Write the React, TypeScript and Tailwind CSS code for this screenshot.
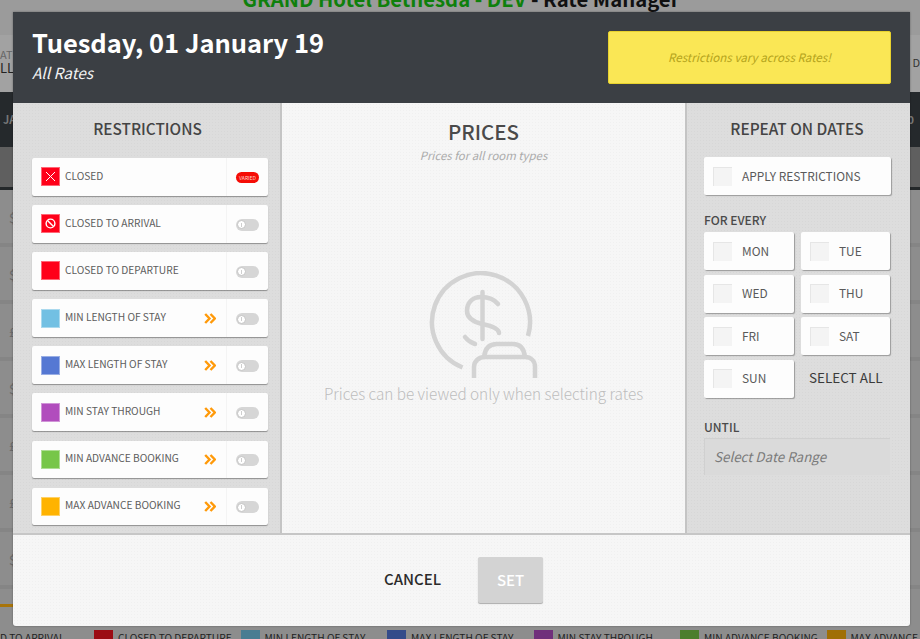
const leftTexture = "bg-[#dddddd] bg-[radial-gradient(#d7d7d7_0.7px,transparent_0.7px)] bg-[length:3px_3px]";
const lightTexture = "bg-[#f6f6f6] bg-[radial-gradient(#f0f0f0_0.7px,transparent_0.7px)] bg-[length:3px_3px]";

const RESTRICTIONS = [
  { label: "CLOSED", color: "bg-[#ff0019]", icon: "x", varied: true },
  { label: "CLOSED TO ARRIVAL", color: "bg-[#ff0019]", icon: "ban" },
  { label: "CLOSED TO DEPARTURE", color: "bg-[#ff0019]" },
  { label: "MIN LENGTH OF STAY", color: "bg-[#72c0e3]", more: true },
  { label: "MAX LENGTH OF STAY", color: "bg-[#5578d3]", more: true },
  { label: "MIN STAY THROUGH", color: "bg-[#b14dbd]", more: true },
  { label: "MIN ADVANCE BOOKING", color: "bg-[#77c648]", more: true },
  { label: "MAX ADVANCE BOOKING", color: "bg-[#ffb300]", more: true },
];

const LEGEND = [
  { label: "CLOSED TO DEPARTURE", color: "bg-[#9c0c14]" },
  { label: "MIN LENGTH OF STAY", color: "bg-[#4a7d92]" },
  { label: "MAX LENGTH OF STAY", color: "bg-[#344b8a]" },
  { label: "MIN STAY THROUGH", color: "bg-[#702f7b]" },
  { label: "MIN ADVANCE BOOKING", color: "bg-[#4c7e2d]" },
  { label: "MAX ADVANCE B", color: "bg-[#a06f06]" },
];

const BG_ROWS = ["$", "$", "£", "$", "£", "£", "$"];

function Swatch({ color, icon }: { color: string; icon?: string }) {
  return (
    <div className={`${color} w-[19px] h-[19px] shrink-0 flex items-center justify-center border border-white/40`}>
      {icon === "x" && (
        <svg width="11" height="11" viewBox="0 0 11 11" fill="none" stroke="#fff" strokeWidth="1">
          <path d="M1 1l9 9M10 1l-9 9" />
        </svg>
      )}
      {icon === "ban" && (
        <svg width="11" height="11" viewBox="0 0 11 11" fill="none" stroke="#fff" strokeWidth="1.4">
          <circle cx="5.5" cy="5.5" r="4.4" />
          <path d="M2.5 2.5l6 6" />
        </svg>
      )}
    </div>
  );
}

function Chevrons() {
  return (
    <svg width="12" height="11" viewBox="0 0 12 11" fill="none" stroke="#ff9a0a" strokeWidth="2.4" className="mr-[10px] mt-px shrink-0">
      <path d="M1.2 1l4.3 4.5L1.2 10M6.5 1l4.3 4.5L6.5 10" />
    </svg>
  );
}

function Toggle() {
  return (
    <div className="w-[23px] h-[12px] rounded-full bg-[#d6d6d6] flex items-center pl-[1px]">
      <div className="w-[9px] h-[9px] rounded-full bg-white border border-[#c4c4c4] flex items-center justify-center">
        <div className="w-px h-[4px] bg-[#cfcfcf]" />
      </div>
    </div>
  );
}

function RestrictionCard({ item }: { item: (typeof RESTRICTIONS)[number] }) {
  return (
    <div className="h-[37.6px] bg-[#fdfdfd] rounded-[2px] shadow-[0_1px_1px_rgba(0,0,0,0.35)] flex items-center">
      <div className="flex-1 min-w-0 flex items-center pl-[9px] h-full">
        <Swatch color={item.color} icon={item.icon} />
        <span className="ml-[5px] flex-1 text-[10.2px] leading-none text-[#5c5c5c] -mt-[2px] whitespace-nowrap">{item.label}</span>
        {item.more && <Chevrons />}
      </div>
      <div className="w-[42px] h-full border-l border-[#f4f4f4] flex items-center justify-center pt-[2px]">
        {item.varied ? (
          <div className="w-[23px] h-[11px] rounded-full bg-[#f50d06] text-[#ffd9d0] text-[5px] flex items-center justify-center leading-none">
            VARIED
          </div>
        ) : (
          <Toggle />
        )}
      </div>
    </div>
  );
}

function CheckCard({ label, className }: { label: string; className: string }) {
  return (
    <div className={`h-[38px] bg-[#fdfdfd] rounded-[2px] shadow-[1px_1px_1px_rgba(0,0,0,0.3)] flex items-center pl-[9px] ${className}`}>
      <div className="w-[19px] h-[19px] shrink-0 bg-[#f4f4f4] border-l border-t border-[#e6e6e6]" />
      <span className="text-[11.9px] leading-none text-[#5a5a5a] ml-[10px] -mt-px whitespace-nowrap">{label}</span>
    </div>
  );
}

function PricesIcon() {
  return (
    <svg width="112" height="110" viewBox="28 20 112 110" fill="none" stroke="#d3d3d3" strokeWidth="4.5">
      <path d="M128 85A49 49 0 1 0 62.5 116.5" />
      <path d="M98 53C94 48 88 46 81 46C72 46 67 52 67 60C67 68 74 71 82 73C92 75 99 78 99 82" strokeLinecap="round" />
      <path d="M65 86C68 90 72 92 75 93" strokeLinecap="round" />
      <path d="M82.5 41V88" strokeLinecap="round" />
      <path d="M74 127V116C74 110 79 106 85 106H125C131 106 135 110 135 116V127" />
      <path d="M84 106C85 97 90 93 97 93H113C120 93 124 97 125 106" />
    </svg>
  );
}

// the page behind the modal, dimmed
function BackgroundPage() {
  return (
    <div className="h-full flex flex-col bg-[#8d8d8d]">
      <div className="h-[35px] bg-[#9b9b9b] shrink-0 overflow-hidden flex justify-center pl-[2px]">
        <div className="text-[20.3px] font-bold leading-none -mt-[12px] whitespace-nowrap text-[#111]">
          <span className="text-[#0f800c]">GRAND Hotel Bethesda - DEV</span> - Rate Manager
        </div>
      </div>
      <div className="h-[57px] bg-[#a2a2a2] shrink-0 flex justify-between items-start">
        <div className="pt-[13px]">
          <div className="text-[11px] leading-[13px] text-[#666]">AT</div>
          <div className="text-[13px] leading-[14px] text-[#222]">LL</div>
        </div>
        <div className="pt-[20px] text-[11px] leading-[14px] text-[#333] whitespace-nowrap">T D</div>
      </div>
      <div className="h-[55px] bg-[#25292c] shrink-0 flex justify-between items-center pl-[3px] pr-[6px] text-[11px] text-[#777] font-semibold">
        <span>JA</span>
        <span>10</span>
      </div>
      <div className="h-[43px] bg-[#5f5f5f] shrink-0 border-b-[3px] border-[#24282a]" />
      <div className="flex-1 min-h-0 flex flex-col">
        {BG_ROWS.map((sign, i) => (
          <div key={i} className="h-[57px] shrink-0 border-b-[4px] border-[#858585] pl-[9px] pt-[20px] text-[13px] leading-[16px] text-[#6a6a6a]">
            {sign}
          </div>
        ))}
      </div>
      <div className="h-[3px] bg-[#a8740a] w-[13px] absolute left-0 top-[604px]" />
      <div className="absolute left-0 top-[630px] w-[920px] h-[9px] flex items-start text-[10.2px] leading-none text-[#222] whitespace-nowrap overflow-hidden">
        <span className="w-[94px] shrink-0 mt-[3px]">D TO ARRIVAL</span>
        {LEGEND.map((l) => (
          <span key={l.label} className="w-[146.5px] shrink-0 flex">
            <span className={`w-[19px] h-[12px] shrink-0 ${l.color}`} />
            <span className="pl-[5px] mt-[3px]">{l.label}</span>
          </span>
        ))}
      </div>
    </div>
  );
}

export default function App() {
  return (
    <div className="relative w-[920px] h-[639px] overflow-hidden font-['Noto_Sans_CJK_SC','Source_Sans_Pro','Liberation_Sans',sans-serif]">
      <BackgroundPage />

      <div className="absolute left-[13px] top-[12px] w-[897px] h-[614px] flex flex-col rounded-b-[3px] overflow-hidden shadow-[0_0_2px_rgba(0,0,0,0.4)]">
        <header className="h-[91px] shrink-0 bg-[#3b3f44] flex justify-between pl-[19px] pr-[19px]">
          <div className="pt-[12px]">
            <div className="text-[25.5px] leading-[36px] font-bold text-white whitespace-nowrap">Tuesday, 01 January 19</div>
            <div className="text-[15.4px] leading-[22px] italic text-[#f2f2f2] mt-[1px]">All Rates</div>
          </div>
          <div className="mt-[19px] w-[283px] h-[53px] rounded-[2px] bg-[#fae755] border border-[#e8d22e] flex items-center justify-center text-[11.6px] italic text-[#b5a41c]">
            Restrictions vary across Rates!
          </div>
        </header>

        <div className="h-[432px] shrink-0 flex border-b-2 border-[#c6c6c6]">
          <section className={`w-[269px] shrink-0 ${leftTexture} border-r-2 border-[#c4c4c4] pl-[19px] pr-[12px]`}>
            <h2 className="h-[54px] mb-px -mt-px pr-[5px] flex items-center justify-center text-[15.4px] font-medium text-[#444]">RESTRICTIONS</h2>
            <div className="flex flex-col gap-[9.5px] pt-[1px]">
              {RESTRICTIONS.map((r) => (
                <RestrictionCard key={r.label} item={r} />
              ))}
            </div>
          </section>

          <section className={`flex-1 min-w-0 ${lightTexture} flex flex-col items-center`}>
            <h2 className="text-[20.5px] leading-[30px] font-medium text-[#4a4a4a] mt-[13px]">PRICES</h2>
            <div className="text-[11.4px] leading-[18px] italic text-[#ababab]">Prices for all room types</div>
            <div className="mt-[107px]">
              <PricesIcon />
            </div>
            <div className="text-[15.3px] leading-[22px] font-light text-[#bdbdbd] whitespace-nowrap mt-[1px]">
              Prices can be viewed only when selecting rates
            </div>
          </section>

          <section className={`w-[225px] shrink-0 ${leftTexture} border-l-2 border-[#c4c4c4] pl-[17px] pr-[18px]`}>
            <h2 className="h-[54px] -mt-px mb-px pr-[2px] flex items-center justify-center text-[15.4px] font-medium text-[#444] whitespace-nowrap">REPEAT ON DATES</h2>
            <CheckCard label="APPLY RESTRICTIONS" className="w-[187px]" />
            <div className="text-[12px] leading-[16px] font-medium text-[#4a4a4a] mt-[17px] mb-[4px]">FOR EVERY</div>
            <div className="grid grid-cols-[90px_89px] gap-x-[7px] gap-y-[4.5px]">
              <CheckCard label="MON" className="" />
              <CheckCard label="TUE" className="" />
              <CheckCard label="WED" className="" />
              <CheckCard label="THU" className="" />
              <CheckCard label="FRI" className="" />
              <CheckCard label="SAT" className="" />
              <CheckCard label="SUN" className="" />
              <div className="h-[38px] flex items-center pl-[8px] -mt-px text-[13.5px] text-[#3a3a3a] whitespace-nowrap">SELECT ALL</div>
            </div>
            <div className="text-[12px] leading-[16px] font-medium text-[#4a4a4a] mt-[21px] mb-[4px]">UNTIL</div>
            <div className="h-[37px] w-[186px] bg-[#dadada] border-l border-t border-[#d0d0d0] flex items-center pl-[9px] -mt-px text-[13.4px] italic text-[#7a7a7a]">
              Select Date Range
            </div>
          </section>
        </div>

        <footer className={`flex-1 min-h-0 ${lightTexture} flex items-center pl-[371px] pb-px`}>
          <span className="text-[15px] font-medium text-[#2b2b2b] -mt-px">CANCEL</span>
          <div className="ml-[37px] w-[65px] h-[46px] rounded-[2px] bg-[#d3d3d3] shadow-[0_1px_1px_rgba(0,0,0,0.3)] flex items-center justify-center text-[15px] font-medium text-white">
            SET
          </div>
        </footer>
      </div>
    </div>
  );
}
